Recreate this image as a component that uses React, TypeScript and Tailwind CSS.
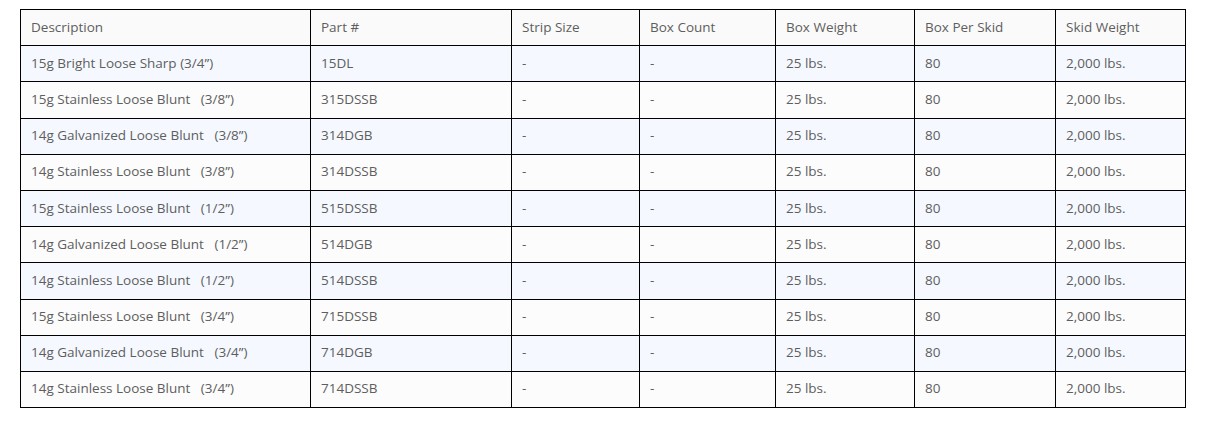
const headers = ["Description", "Part #", "Strip Size", "Box Count", "Box Weight", "Box Per Skid", "Skid Weight"];

const rows: [string, string][] = [
  ["15g Bright Loose Sharp (3/4\u201d)", "15DL"],
  ["15g Stainless Loose Blunt   (3/8\u201d)", "315DSSB"],
  ["14g Galvanized Loose Blunt   (3/8\u201d)", "314DGB"],
  ["14g Stainless Loose Blunt   (3/8\u201d)", "314DSSB"],
  ["15g Stainless Loose Blunt   (1/2\u201d)", "515DSSB"],
  ["14g Galvanized Loose Blunt   (1/2\u201d)", "514DGB"],
  ["14g Stainless Loose Blunt   (1/2\u201d)", "514DSSB"],
  ["15g Stainless Loose Blunt   (3/4\u201d)", "715DSSB"],
  ["14g Galvanized Loose Blunt   (3/4\u201d)", "714DGB"],
  ["14g Stainless Loose Blunt   (3/4\u201d)", "714DSSB"],
];

const widths = ["w-[290px]", "w-[201px]", "w-[128px]", "w-[136px]", "w-[139px]", "w-[141px]", "w-[130px]"];

export default function App() {
  return (
    <div className="w-[1215px] h-[434px] bg-white pt-[9px] pl-[20px] font-['Open_Sans',sans-serif] text-[13.5px] text-[#5e5e5e]">
      <table className="w-[1166px] table-fixed border-collapse border border-black">
        <colgroup>
          {widths.map((w, i) => (
            <col key={i} className={w} />
          ))}
        </colgroup>
        <thead>
          <tr className="h-[36.2px] bg-[#fafafa]">
            {headers.map((h) => (
              <th key={h} className="border border-black px-[10px] pb-[1px] text-left font-normal leading-[21px]">
                {h}
              </th>
            ))}
          </tr>
        </thead>
        <tbody>
          {rows.map(([desc, part], i) => (
            <tr key={part} className={`h-[36.2px] ${i % 2 === 0 ? "bg-[#f5f9ff]" : "bg-[#fcfcfc]"}`}>
              <td className="border border-black px-[10px] pb-[1px] leading-[21px] whitespace-pre">{desc}</td>
              <td className="border border-black px-[10px] pb-[1px] leading-[21px]">{part}</td>
              <td className="border border-black px-[10px] pb-[1px] leading-[21px]">-</td>
              <td className="border border-black px-[10px] pb-[1px] leading-[21px]">-</td>
              <td className="border border-black px-[10px] pb-[1px] leading-[21px]">25 lbs.</td>
              <td className="border border-black px-[10px] pb-[1px] leading-[21px]">80</td>
              <td className="border border-black px-[10px] pb-[1px] leading-[21px]">2,000 lbs.</td>
            </tr>
          ))}
        </tbody>
      </table>
    </div>
  );
}
